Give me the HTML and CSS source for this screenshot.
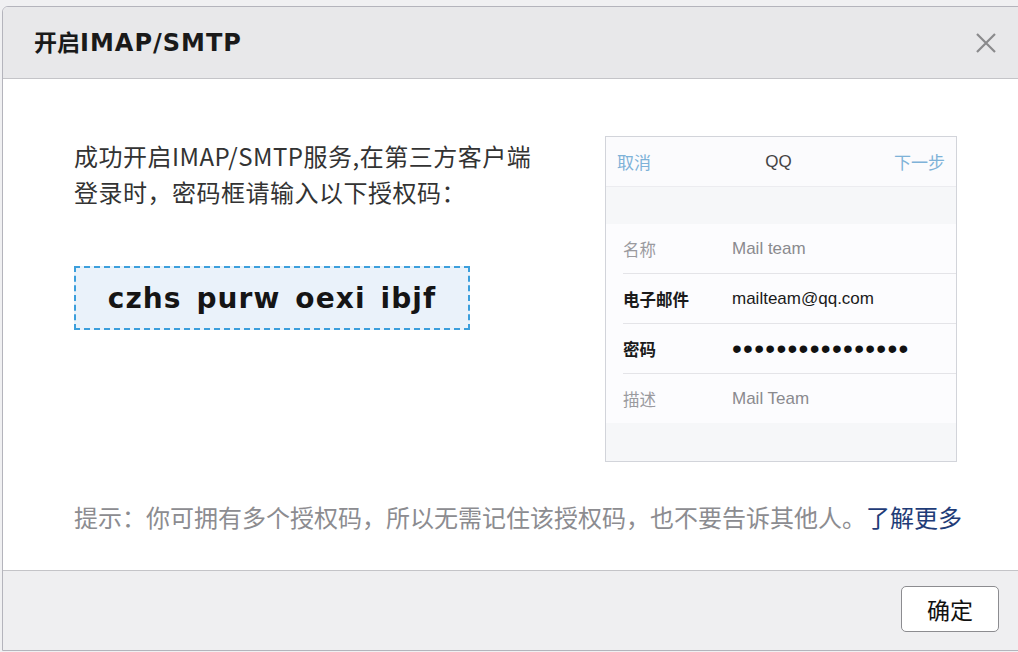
FILE: index.html
```html
<!DOCTYPE html>
<html lang="zh-CN">
<head>
  <meta charset="UTF-8" />
  <meta name="viewport" content="width=device-width, initial-scale=1.0" />
  <title>开启IMAP/SMTP</title>
  <link rel="stylesheet" href="styles.css">
</head>
<body>
  <div class="dialog">
    <div class="dialog-header">
      <h1>开启<span class="title-latin">IMAP/SMTP</span></h1>
      <span class="close-button">
        <svg width="22" height="22" viewBox="0 0 22 22"><path d="M2 2 L20 20 M20 2 L2 20" stroke="#8a8a8c" stroke-width="2.2" fill="none"/></svg>
      </span>
    </div>

    <div class="dialog-body">
      <div class="main-row">
        <div class="left-col">
          <p class="intro">成功开启IMAP/SMTP服务,在第三方客户端<br>登录时，密码框请输入以下授权码：</p>
          <div class="auth-code">czhs purw oexi ibjf</div>
        </div>

        <div class="phone-card">
          <div class="phone-bar">
            <span class="bar-link">取消</span>
            <span class="bar-title">QQ</span>
            <span class="bar-link">下一步</span>
          </div>
          <div class="phone-gap"></div>
          <ul class="phone-rows">
            <li class="row muted"><span class="label">名称</span><span class="value">Mail team</span></li>
            <li class="row"><span class="label">电子邮件</span><span class="value">mailteam@qq.com</span></li>
            <li class="row"><span class="label">密码</span><span class="value dots">&bull;&bull;&bull;&bull;&bull;&bull;&bull;&bull;&bull;&bull;&bull;&bull;&bull;&bull;&bull;&bull;</span></li>
            <li class="row muted"><span class="label">描述</span><span class="value">Mail Team</span></li>
          </ul>
        </div>
      </div>

      <p class="hint">提示：你可拥有多个授权码，所以无需记住该授权码，也不要告诉其他人。<a href="#" class="more-link">了解更多</a></p>
    </div>

    <div class="dialog-footer">
      <button class="ok-button">确定</button>
    </div>
  </div>
</body>
</html>
```

FILE: styles.css
```css
body {
  margin: 0;
  padding: 0;
  background-color: #f0f0f2;
  font-family: "Noto Sans CJK SC", "Noto Sans", sans-serif;
  color: #333;
  overflow: hidden;
}
.dialog {
  margin: 6px 0 0 2px;
  width: 1030px;
  height: 645px;
  border: 1px solid #b4b4bc;
  border-top-left-radius: 6px;
  background-color: #fff;
  overflow: hidden;
  box-sizing: border-box;
}
.dialog-header {
  height: 72px;
  background-color: #e8e8ea;
  border-bottom: 1px solid #c4c4c8;
  box-sizing: border-box;
  display: flex;
  align-items: center;
  justify-content: space-between;
  padding: 0 34px 0 31px;
}
.dialog-header h1 {
  margin: 0 0 4px;
  font-size: 23px;
  font-weight: bold;
  color: #1a1a1a;
}
.title-latin {
  font-family: "DejaVu Sans", sans-serif;
  font-size: 24px;
  letter-spacing: 1px;
}
.close-button {
  display: flex;
}
.dialog-body {
  height: 491px;
  box-sizing: border-box;
  padding: 57px 0 0 71px;
}
.main-row {
  display: flex;
}
.left-col {
  width: 531px;
  padding-top: 2px;
}
.intro {
  margin: 0;
  font-size: 24px;
  line-height: 36px;
  letter-spacing: 0.5px;
  color: #333;
}
.auth-code {
  margin-top: 56px;
  width: 396px;
  height: 64px;
  box-sizing: border-box;
  border: 2px dashed #3c9fdc;
  background-color: #eaf2fa;
  display: flex;
  align-items: center;
  justify-content: center;
  font-family: "DejaVu Sans", sans-serif;
  font-weight: bold;
  font-size: 28px;
  letter-spacing: 1.1px;
  word-spacing: 4px;
  color: #151515;
}
.phone-card {
  width: 352px;
  height: 326px;
  box-sizing: border-box;
  border: 1px solid #d2d4da;
  background-color: #f6f7f9;
}
.phone-bar {
  height: 50px;
  box-sizing: border-box;
  background-color: #fbfbfd;
  border-bottom: 1px solid #ececf0;
  display: flex;
  align-items: center;
  justify-content: space-between;
  padding: 0 11px;
  font-size: 17px;
}
.bar-link {
  color: #7eb2d8;
}
.bar-title {
  font-family: "Liberation Sans", sans-serif;
  color: #444;
  padding-left: 12px;
}
.phone-gap {
  height: 37px;
}
.phone-rows {
  list-style: none;
  margin: 0;
  padding: 0 0 0 17px;
  background-color: #fcfcfe;
}
.row {
  height: 49px;
  display: flex;
  align-items: center;
  border-bottom: 1px solid #e4e4e8;
  font-size: 16.5px;
  color: #1a1a1a;
}
.row:last-child {
  border-bottom: none;
}
.row .label {
  width: 109px;
  font-weight: bold;
}
.row .value {
  font-family: "Liberation Sans", sans-serif;
  font-size: 17px;
}
.row.muted .label {
  font-weight: normal;
  color: #9a9a9e;
}
.row.muted .value {
  color: #8a8a8e;
}
.row .dots {
  font-size: 28px;
  line-height: 1;
  letter-spacing: 1.3px;
  color: #111;
}
.hint {
  margin: 37px 0 0;
  font-size: 24px;
  line-height: 36px;
  color: #8c8c90;
}
.more-link {
  color: #1f3c78;
  text-decoration: none;
}
.dialog-footer {
  height: 80px;
  box-sizing: border-box;
  background-color: #efeff1;
  border-top: 1px solid #c4c4c8;
  display: flex;
  align-items: flex-start;
  padding: 15px 0 0 898px;
}
.ok-button {
  width: 98px;
  height: 46px;
  background-color: #fff;
  border: 1px solid #8c8c90;
  border-radius: 5px;
  font-family: "Noto Sans CJK SC", sans-serif;
  font-size: 23px;
  color: #111;
  cursor: pointer;
}
```
